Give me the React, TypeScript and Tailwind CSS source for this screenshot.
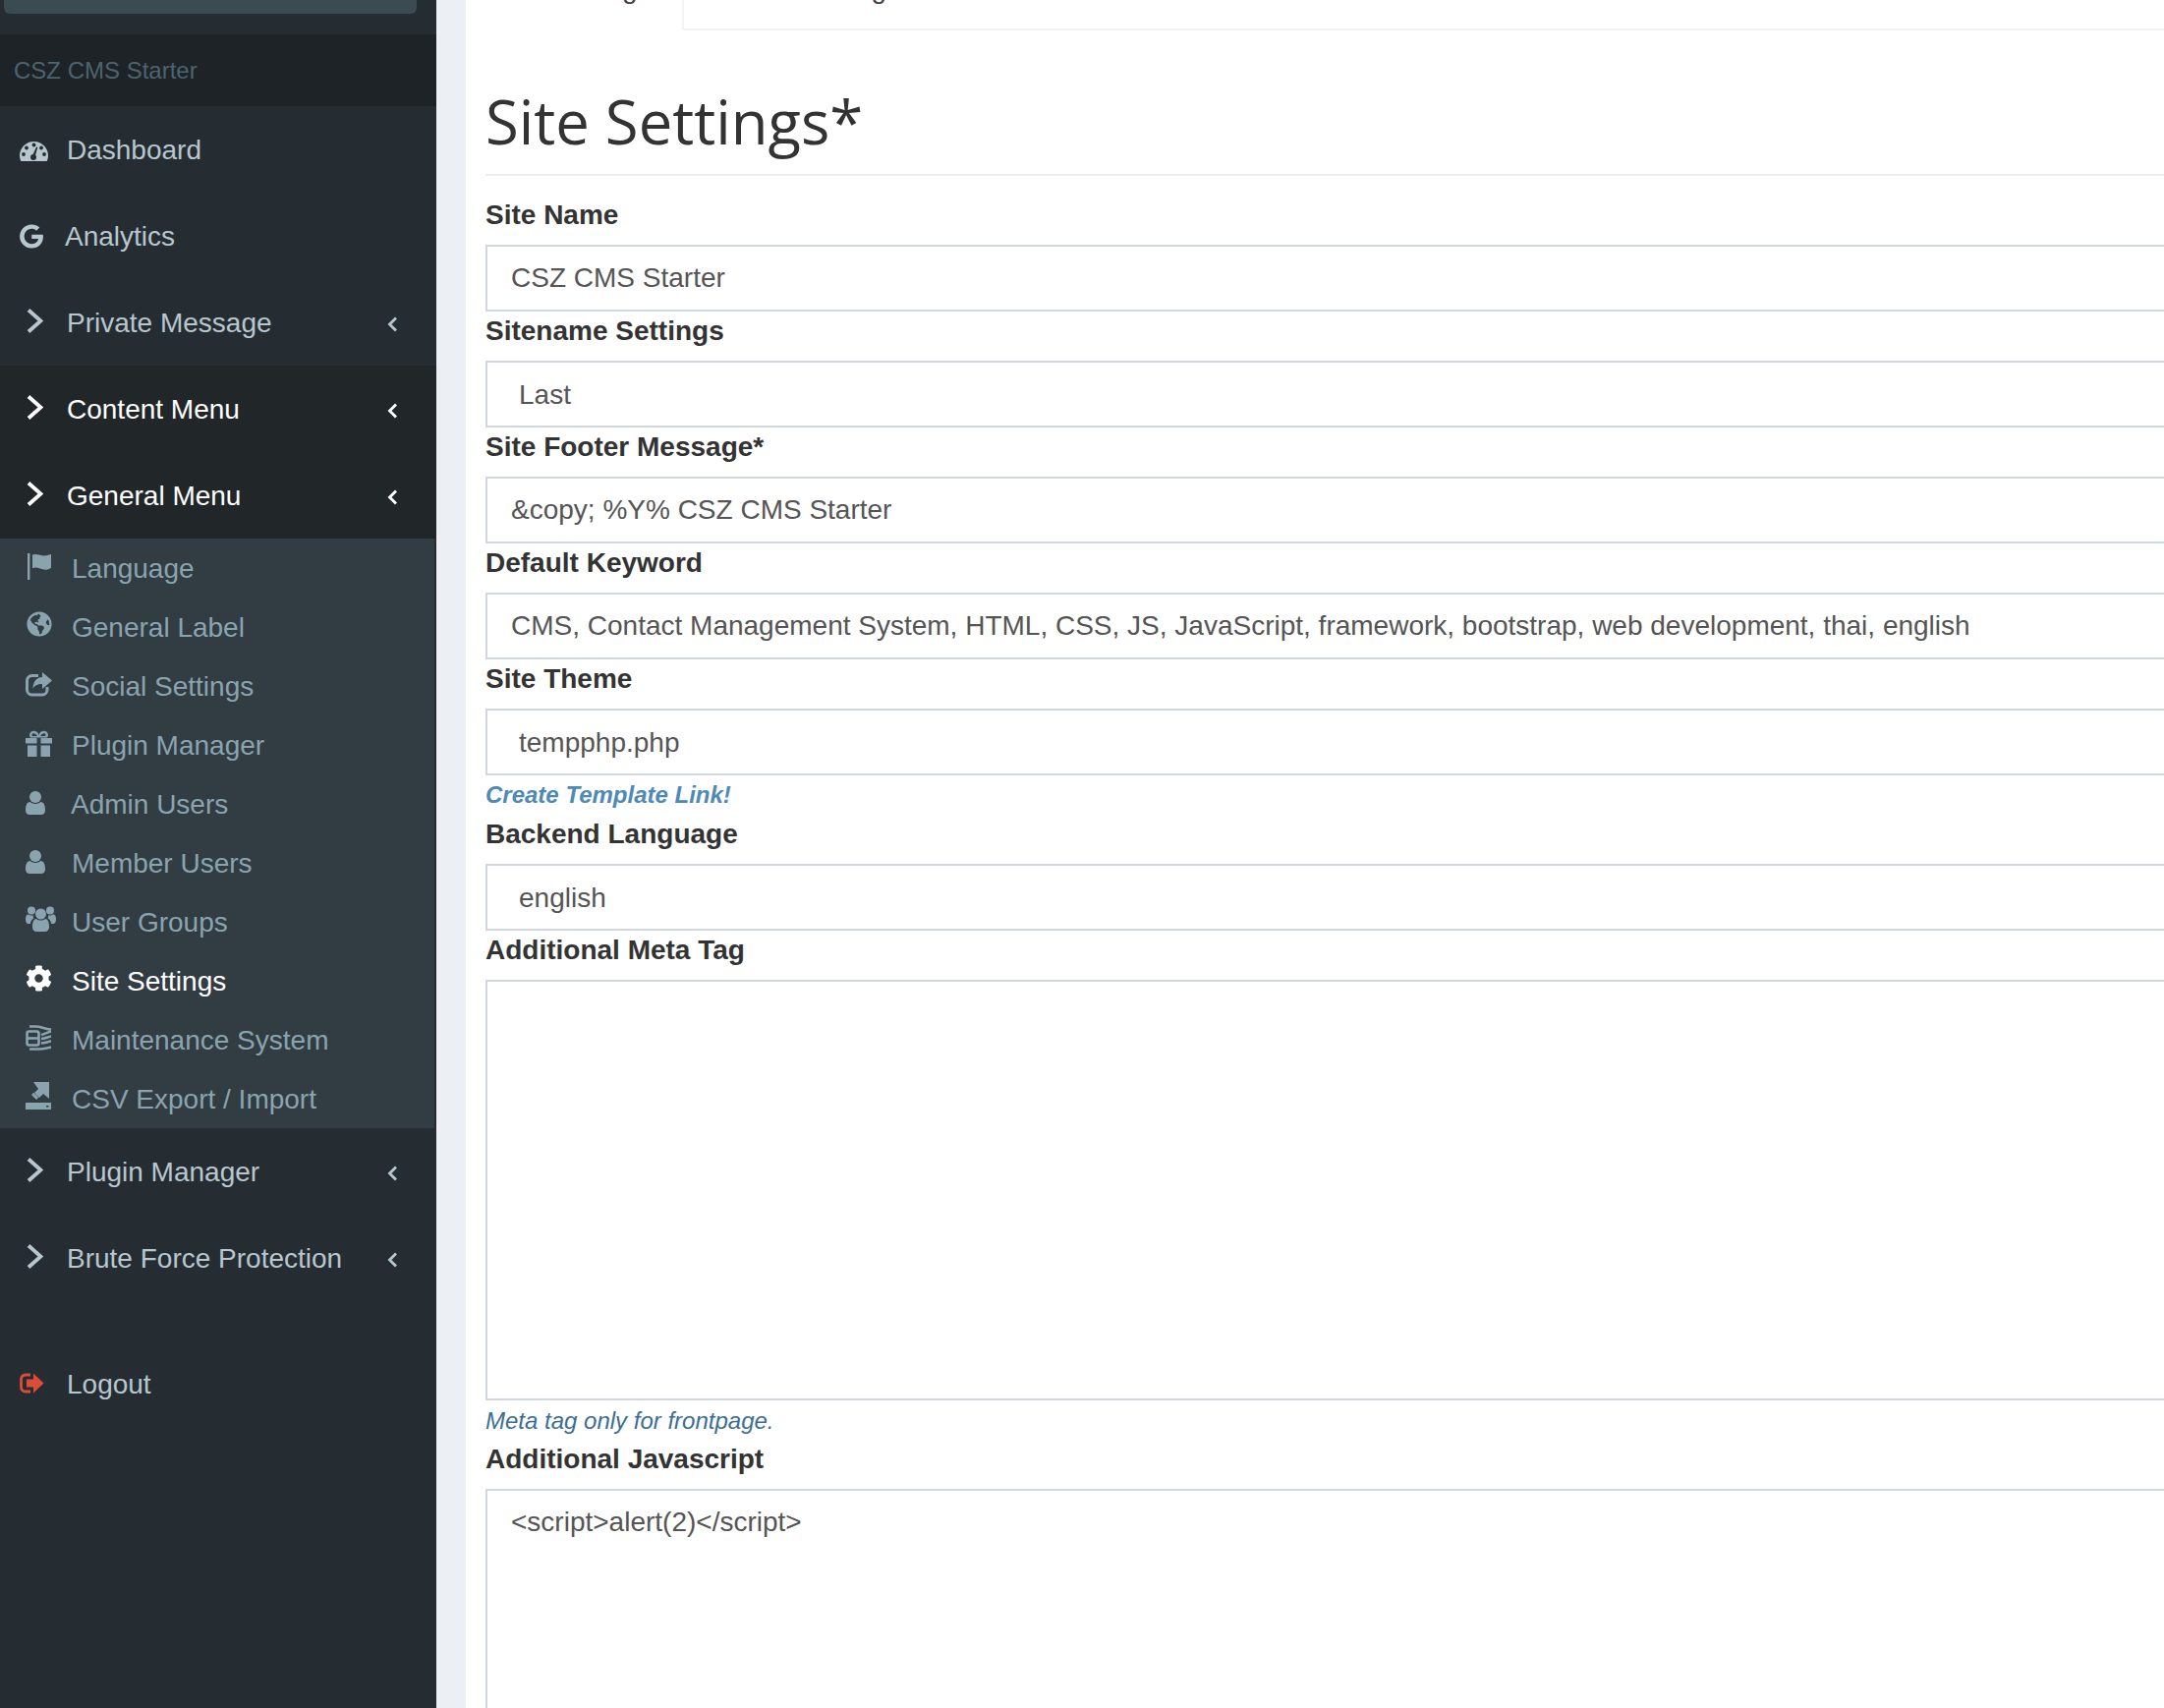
import { FaCog, FaGlobeAmericas, FaGoogle } from "react-icons/fa";
import type { ReactNode } from "react";

const arial = "font-['Liberation_Sans',Arial,sans-serif]";

const ChevronLeft = () => (
  <svg viewBox="0 0 10 16" className="absolute top-[38px] right-[40px] h-[16px] w-[10px]" fill="none" stroke="currentColor" strokeWidth="2.8">
    <path d="M9 1.5 2.5 8 9 14.5" />
  </svg>
);

function Top({ icon, label, active, hasChild, dark, textClass = "pl-[68px]" }: { icon: ReactNode; label: string; active?: boolean; hasChild?: boolean; dark?: boolean; textClass?: string }) {
  return (
    <div className={`relative flex h-[88px] items-center pt-[1px] text-[28px] ${dark ? "bg-[#212729]" : ""} ${active ? "text-white" : "text-[#b8c7ce]"}`}>
      {icon}
      <span className={textClass}>{label}</span>
      {hasChild && <ChevronLeft />}
    </div>
  );
}

const Arrow = () => (
  <svg viewBox="0 0 17 25" className="absolute top-[30px] left-[27px] h-[25px] w-[17px]" fill="none" stroke="currentColor" strokeWidth="3.8">
    <path d="M2 1.5 14.5 12.5 2 23.5" />
  </svg>
);

function Sub({ icon, label, active, textClass = "pl-[73px]" }: { icon: ReactNode; label: string; active?: boolean; textClass?: string }) {
  return (
    <div className={`relative flex h-[60px] items-center pt-[1px] text-[28px] ${active ? "text-white" : "text-[#8aa4af]"}`}>
      {icon}
      <span className={textClass}>{label}</span>
    </div>
  );
}

const DashIcon = () => (
  <svg viewBox="0 0 29 21" className="absolute top-[35px] left-[20px] h-[21px] w-[29px]">
    <path fill="currentColor" d="M0 15.5a14.5 14.5 0 0 1 29 0c0 2-.6 4-1.3 5.5H1.3C.6 19.5 0 17.5 0 15.5z" />
    <g fill="#252d33">
      <circle cx="14.5" cy="4.5" r="1.9" />
      <circle cx="7" cy="7.5" r="1.9" />
      <circle cx="22" cy="7.5" r="1.9" />
      <circle cx="4" cy="14" r="1.9" />
      <circle cx="25" cy="14" r="1.9" />
      <circle cx="14" cy="17" r="3" />
      <path d="M13 15.5 17 6.5l1.3.5-2.6 9z" />
    </g>
  </svg>
);

const FlagIcon = () => (
  <svg viewBox="0 0 25 27" className="absolute top-[15px] left-[28px] h-[27px] w-[25px]" fill="currentColor">
    <rect x="0" y="0" width="2.4" height="27" />
    <path d="M5 1.5c5-2 9 2 14 .8 2-.4 4-1 5-1.6v14c-2 1.500-4 2-6 2-5 0-8-3.500-13-1.500z" />
  </svg>
);

const ShareIcon = () => (
  <svg viewBox="0 0 27 25" className="absolute top-[16px] left-[26px] h-[25px] w-[27px]" fill="none">
    <path stroke="currentColor" strokeWidth="3" d="M13 3.500H6.500a5 5 0 0 0-5 5V18a5 5 0 0 0 5 5H17a5 5 0 0 0 5-5v-3" />
    <path fill="currentColor" d="M17 0l10 8.500-10 8.500v-5c-5 0-8 1.500-9.500 5 0-7 3.500-12 9.500-12z" />
  </svg>
);

const GiftIcon = () => (
  <svg viewBox="0 0 27 27" className="absolute top-[15px] left-[26px] h-[27px] w-[27px]" fill="currentColor">
    <path fillRule="evenodd" d="M4 5c0-5 8-6 9.500 0C15-1 23 0 23 5c0 1-.5 2-1 2.500H5C4.500 7 4 6 4 5zm2.500 0c0 .7.6 1 1 1H12C10 2.500 6.500 2.500 6.500 5zM15 6h4.500c.5 0 1-.3 1-1 0-2.500-3.500-2.500-5.500 1z" />
    <rect x="0" y="8" width="11.500" height="5.500" />
    <rect x="15.500" y="8" width="11.500" height="5.500" />
    <rect x="2" y="15.500" width="9.500" height="11.500" />
    <rect x="15.500" y="15.500" width="9.500" height="11.500" />
  </svg>
);

const UserIcon = () => (
  <svg viewBox="0 0 20 24" className="absolute top-[17px] left-[26px] h-[24px] w-[20px]" fill="currentColor">
    <circle cx="10" cy="6" r="6" />
    <path d="M0 19.500c0-5 1.500-8.500 4.500-8.500 1.500 1.300 3.300 2 5.500 2s4-.7 5.500-2c3 0 4.500 3.500 4.500 8.500 0 3-2 4.500-4 4.500H4c-2 0-4-1.500-4-4.500z" />
  </svg>
);

const UsersIcon = () => (
  <svg viewBox="0 0 31 26" className="absolute top-[14px] left-[26px] h-[26px] w-[31px]" fill="currentColor">
    <circle cx="15.500" cy="8" r="5.500" />
    <circle cx="6" cy="4.500" r="4" />
    <circle cx="25" cy="4.500" r="4" />
    <path d="M7 21c0-5 1.500-8 4-8 1.200 1 2.700 1.600 4.500 1.600S18.800 14 20 13c2.500 0 4 3 4 8 0 3.500-2 5-4 5h-9c-2 0-4-1.500-4-5z" />
    <path d="M0 13c0-2.500 1-4.500 3-4.500 1 .7 2 1 3 1h2c-.3 1-.3 2 .3 3-1.800.8-3 2.500-3.500 5.500H3c-2 0-3-1.500-3-5zM31 13c0-2.500-1-4.500-3-4.500-1 .7-2 1-3 1h-2c.3 1 .3 2-.3 3 1.800.8 3 2.500 3.500 5.500H28c2 0 3-1.500 3-5z" />
  </svg>
);

const MaintIcon = () => (
  <svg viewBox="0 0 27 26" className="absolute top-[15px] left-[26px] h-[26px] w-[27px]" fill="none" stroke="currentColor" strokeWidth="2.6">
    <rect x="1.500" y="6.500" width="12" height="14" rx="2" />
    <path d="M1.500 13.500h12" />
    <path d="M4 1.500h7c5 0 8 3 15 3M16 10c4-1 7-3 10-3.500M16 14c4 0 7-2 10-2.500M16 18.500c4 0 7-2 10-2M4 24.500h8c5 0 9-1 14-2" />
  </svg>
);

const CsvIcon = () => (
  <svg viewBox="0 0 26 28" className="absolute top-[13px] left-[26px] h-[28px] w-[26px]" fill="currentColor">
    <path fillRule="evenodd" d="M0 21h26v7H0zM21 24v1.500h2.500V24z" />
    <path d="M8 0h16v17l-6-5-4 4-5-5 4-4z" />
    <path d="M6 13l2.200-2.200 5 5L11 18z" />
  </svg>
);

const LogoutIcon = () => (
  <svg viewBox="0 0 25 21" className="absolute top-[33px] left-[20px] h-[21px] w-[25px] text-[#dd4b39]" fill="none">
    <path stroke="currentColor" strokeWidth="2.800" d="M11 2H6a4.500 4.500 0 0 0-4.500 4.500v8A4.500 4.500 0 0 0 6 19h5" />
    <path fill="currentColor" d="M7 6.500h7V.500l10.500 10-10.500 10v-6H7z" />
  </svg>
);

const fields1 = [
  ["Site Name", "CSZ CMS Starter", false],
  ["Sitename Settings", "Last", true],
  ["Site Footer Message*", "&copy; %Y% CSZ CMS Starter", false],
  ["Default Keyword", "CMS, Contact Management System, HTML, CSS, JS, JavaScript, framework, bootstrap, web development, thai, english", false],
  ["Site Theme", "tempphp.php", true],
] as const;

function Label({ children }: { children: ReactNode }) {
  return <div className="mb-[10px] h-[40px] text-[28px] leading-[40px] font-bold text-[#333]">{children}</div>;
}

function Box({ text, select }: { text: string; select?: boolean }) {
  return (
    <div className={`h-[68px] w-[1800px] border-2 border-[#d2d6de] bg-white text-[28px] whitespace-nowrap text-[#555] ${select ? "pl-[32px] leading-[65px]" : "pl-[24px] leading-[64px]"}`}>
      {text}
    </div>
  );
}

export default function App() {
  return (
    <div className={`flex h-[1738px] w-[2202px] overflow-hidden bg-[#ecf0f5] ${arial}`}>
      <aside className="h-full w-[444px] shrink-0 bg-[#252d33]">
        <div className="mx-[4px] h-[14px] w-[420px] rounded-b-[6px] bg-[#3c4a52]" />
        <div className="mt-[21px] flex h-[73px] items-center bg-[#1e2327] pl-[14px] text-[24px] text-[#4b646f]">CSZ CMS Starter</div>
        <Top label="Dashboard" icon={<DashIcon />} />
        <Top label="Analytics" textClass="pl-[66px]" icon={<FaGoogle className="absolute top-[32px] left-[20px] h-[25px] w-[24px]" />} />
        <Top label="Private Message" hasChild icon={<Arrow />} />
        <Top label="Content Menu" hasChild dark active icon={<Arrow />} />
        <Top label="General Menu" hasChild dark active icon={<Arrow />} />
        <div className="mr-[2px] bg-[#323c43]">
          <Sub label="Language" icon={<FlagIcon />} />
          <Sub label="General Label" icon={<FaGlobeAmericas className="absolute top-[14px] left-[27px] h-[26px] w-[26px]" />} />
          <Sub label="Social Settings" icon={<ShareIcon />} />
          <Sub label="Plugin Manager" icon={<GiftIcon />} />
          <Sub label="Admin Users" textClass="pl-[72px]" icon={<UserIcon />} />
          <Sub label="Member Users" icon={<UserIcon />} />
          <Sub label="User Groups" icon={<UsersIcon />} />
          <Sub label="Site Settings" active icon={<FaCog className="absolute top-[14px] left-[26px] h-[27px] w-[27px]" />} />
          <Sub label="Maintenance System" icon={<MaintIcon />} />
          <Sub label="CSV Export / Import" icon={<CsvIcon />} />
        </div>
        <Top label="Plugin Manager" hasChild icon={<Arrow />} />
        <Top label="Brute Force Protection" hasChild icon={<Arrow />} />
        <div className="h-[40px]" />
        <Top label="Logout" icon={<LogoutIcon />} />
      </aside>
      <div className="w-[30px] shrink-0" />
      <main className="min-w-0 flex-1 bg-white pl-[20px]">
        <div className="-ml-[20px] flex h-[31px] overflow-hidden">
          <div className="flex h-[31px] w-[220px] shrink-0 items-end justify-center pb-[22px] text-[28px] leading-[40px] text-[#444]">Site Settings</div>
          <div className="flex h-[31px] flex-1 items-end border-b-2 border-l-2 border-[#f4f4f4] pb-[20px] pl-[41px] text-[28px] leading-[40px] text-[#444]">Email Settings</div>
        </div>
        <h1 className="mt-[47px] h-[101px] border-b-2 border-[#eee] font-['Open_Sans',sans-serif] text-[61.6px] leading-[90px] font-normal text-[#333]">Site Settings*</h1>
        <div className="mt-[20px]">
          {fields1.map(([l, v, s]) => (
            <div key={l}>
              <Label>{l}</Label>
              <Box text={v} select={s} />
            </div>
          ))}
          <div className="flex h-[40px] items-center text-[24px] font-bold text-[#4f8ab5] italic">Create Template Link!</div>
          <Label>Backend Language</Label>
          <Box text="english" select />
          <Label>Additional Meta Tag</Label>
          <div className="h-[428px] w-[1800px] border-2 border-[#d2d6de] bg-white" />
          <div className="flex h-[40px] items-center pt-[1px] text-[24px] text-[#3c6e94] italic">Meta tag only for frontpage.</div>
          <Label>Additional Javascript</Label>
          <div className="h-[300px] w-[1800px] border-2 border-[#d2d6de] bg-white pt-[12px] pl-[24px] text-[28px] leading-[40px] text-[#555]">{"<script>alert(2)</script>"}</div>
        </div>
      </main>
    </div>
  );
}
